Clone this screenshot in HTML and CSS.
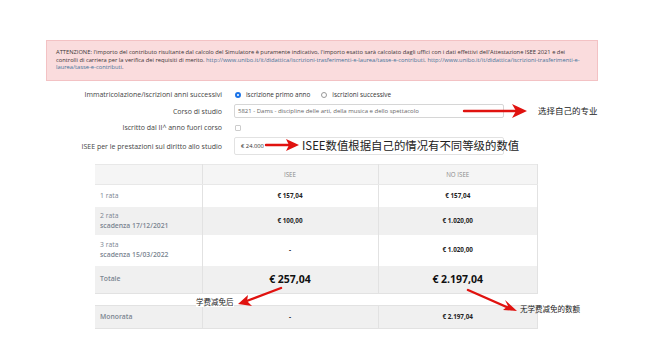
FILE: index.html
```html
<!DOCTYPE html>
<html lang="en">
<head>
    <meta charset="UTF-8">
    <meta name="viewport" content="width=device-width, initial-scale=1.0">
    <title>Simulatore contributi</title>
    <link rel="stylesheet" href="styles.css">
</head>
<body>
    <div class="page">
        <div class="alert">
            ATTENZIONE: l'importo del contributo risultante dal calcolo del Simulatore è puramente indicativo, l'importo esatto sarà calcolato dagli uffici con i dati effettivi dell'Attestazione ISEE 2021 e dei<br>
            controlli di carriera per la verifica dei requisiti di merito. <a href="#">http://www.unibo.it/it/didattica/iscrizioni-trasferimenti-e-laurea/tasse-e-contributi</a>. <a href="#">http://www.unibo.it/it/didattica/iscrizioni-trasferimenti-e-</a><br>
            <a href="#">laurea/tasse-e-contributi</a>.
        </div>

        <div class="form">
            <div class="label">Immatricolazione/iscrizioni anni successivi</div>
            <div class="control radios">
                <span class="radio checked"></span><span class="opt">iscrizione primo anno</span>
                <span class="radio"></span><span class="opt">iscrizioni successive</span>
            </div>

            <div class="label">Corso di studio</div>
            <div class="control">
                <div class="select">5821 - Dams - discipline delle arti, della musica e dello spettacolo</div>
            </div>

            <div class="label">Iscritto dal II^ anno fuori corso</div>
            <div class="control">
                <span class="check"></span>
            </div>

            <div class="label">ISEE per le prestazioni sul diritto allo studio</div>
            <div class="control">
                <div class="input">€ 24.000</div>
            </div>
        </div>

        <table class="rates">
            <tr class="head">
                <td class="name"></td>
                <td>ISEE</td>
                <td>NO ISEE</td>
            </tr>
            <tr class="first">
                <td class="name">1 rata</td>
                <td class="val">€ 157,04</td>
                <td class="val">€ 157,04</td>
            </tr>
            <tr class="grey two">
                <td class="name">2 rata<br><b>scadenza 17/12/2021</b></td>
                <td class="val">€ 100,00</td>
                <td class="val">€ 1.020,00</td>
            </tr>
            <tr class="three">
                <td class="name">3 rata<br><b>scadenza 15/03/2022</b></td>
                <td class="val">-</td>
                <td class="val">€ 1.020,00</td>
            </tr>
            <tr class="grey total">
                <td class="name"><b>Totale</b></td>
                <td class="big">€ 257,04</td>
                <td class="big">€ 2.197,04</td>
            </tr>
            <tr class="gap">
                <td colspan="3"></td>
            </tr>
            <tr class="grey mono">
                <td class="name"><b>Monorata</b></td>
                <td class="val">-</td>
                <td class="val">€ 2.197,04</td>
            </tr>
        </table>

        <!-- annotations drawn on top of the screenshot -->
        <svg class="arrows" width="654" height="349">
            <g stroke="#e0120f" stroke-width="2.4" fill="none" stroke-linecap="round">
                <line x1="464" y1="111" x2="521" y2="111"/>
                <line x1="266" y1="145" x2="294" y2="145"/>
                <line x1="281" y1="288" x2="244" y2="302"/>
                <line x1="468" y1="290" x2="511" y2="309"/>
            </g>
            <g fill="#e0120f">
                <polygon points="527,111 512,104 516,111 512,118"/>
                <polygon points="299,145 286,139 289,145 286,151"/>
                <polygon points="238,304 248,295 247,301 252,306"/>
                <polygon points="517,311 503,310 508,306 505,300"/>
            </g>
        </svg>
        <div class="note note-course">选择自己的专业</div>
        <div class="note note-isee">ISEE数值根据自己的情况有不同等级的数值</div>
        <div class="note note-after">学费减免后</div>
        <div class="note note-full">无学费减免的数额</div>
    </div>
</body>
</html>
```

FILE: styles.css
```css
* {
    padding: 0;
    margin: 0;
    box-sizing: border-box;
}
body {
    background: #fff;
    font-family: "Open Sans", "Noto Sans CJK SC", sans-serif;
    color: #333;
}
.page {
    position: relative;
    width: 654px;
    height: 349px;
    padding-top: 40px;
}

.alert {
    margin-left: 46px;
    width: 552px;
    height: 41px;
    padding: 8px 8px 0 9px;
    background-color: #fadcdd;
    border: 1px solid #f3c2c4;
    color: #3b3536;
    font-size: 5.75px;
    line-height: 7.6px;
    white-space: nowrap;
}
.alert a {
    color: #44739a;
    text-decoration: none;
}

.form {
    display: grid;
    grid-template-columns: 222px 270px;
    column-gap: 12px;
    row-gap: 3px;
    margin-top: 7px;
    font-size: 7px;
}
.label {
    text-align: right;
    color: #444;
    display: flex;
    align-items: center;
    justify-content: flex-end;
}
.control {
    display: flex;
    align-items: center;
    min-height: 13px;
}
.radios {
    font-size: 6.4px;
    color: #333;
}
.radio {
    width: 6px;
    height: 6px;
    border-radius: 50%;
    border: 1px solid #999;
    margin: 0 5px 0 1px;
}
.radio.checked {
    border: 2px solid #1a73e8;
    background: #fff;
}
.opt {
    margin-right: 10px;
}
.select {
    width: 270px;
    height: 14px;
    border: 1px solid #d6d6d6;
    border-radius: 2px;
    padding-left: 3px;
    font-size: 6px;
    line-height: 12px;
    color: #666;
}
.check {
    width: 6px;
    height: 6px;
    border: 1px solid #ccc;
    border-radius: 1px;
    margin-left: 1px;
}
.input {
    width: 270px;
    height: 18px;
    border: 1px solid #e2e2e2;
    border-radius: 2px;
    padding-left: 6px;
    font-size: 5.8px;
    line-height: 16px;
    color: #333;
}

.rates {
    margin: 9px 0 0 95px;
    border-collapse: collapse;
    width: 443px;
    font-size: 6px;
    line-height: 8px;
    table-layout: fixed;
}
.rates td {
    border-left: 1px solid #e2e2e2;
    border-right: 1px solid #e2e2e2;
    text-align: center;
    padding: 0;
}
.rates td:nth-child(1) {
    width: 107px;
}
.rates td:nth-child(2) {
    width: 176px;
}
.rates td.name {
    text-align: left;
    padding-left: 5px;
    color: #7b8591;
    font-size: 6.8px;
    line-height: 10px;
    border-left: none;
}
.rates td.name b {
    font-weight: 600;
}
.rates .head td {
    height: 20px;
    background: #f5f5f5;
    border-top: 1px solid #e8e8e8;
    border-bottom: 1px solid #e8e8e8;
    color: #8a8a8a;
    font-size: 6.2px;
}
.rates .grey td {
    background: #f0f0f0;
}
.rates .first td {
    height: 22px;
}
.rates .two td {
    height: 28px;
}
.rates .three td {
    height: 31px;
}
.rates .total td {
    height: 28px;
    border-bottom: 1px solid #e2e2e2;
}
.rates .gap td {
    height: 12px;
    border: none;
    background: #fff;
    font-size: 0;
    line-height: 0;
}
.rates .mono td {
    height: 23px;
    border-top: 1px solid #e2e2e2;
    border-bottom: 1px solid #e2e2e2;
}
.val {
    font-weight: 700;
    color: #222;
    font-size: 6.3px;
}
.big {
    font-weight: 700;
    color: #111;
    font-size: 10.5px;
}

.arrows {
    position: absolute;
    left: 0;
    top: 0;
    pointer-events: none;
}
.note {
    position: absolute;
    font-family: "Noto Sans CJK SC", sans-serif;
    color: #222;
    white-space: nowrap;
}
.note-course {
    left: 538px;
    top: 104px;
    font-size: 8.5px;
}
.note-isee {
    left: 302px;
    top: 137px;
    font-size: 11.4px;
}
.note-after {
    left: 196px;
    top: 296px;
    font-size: 7.5px;
    background: #fff;
}
.note-full {
    left: 520px;
    top: 303px;
    font-size: 7.5px;
}
```
